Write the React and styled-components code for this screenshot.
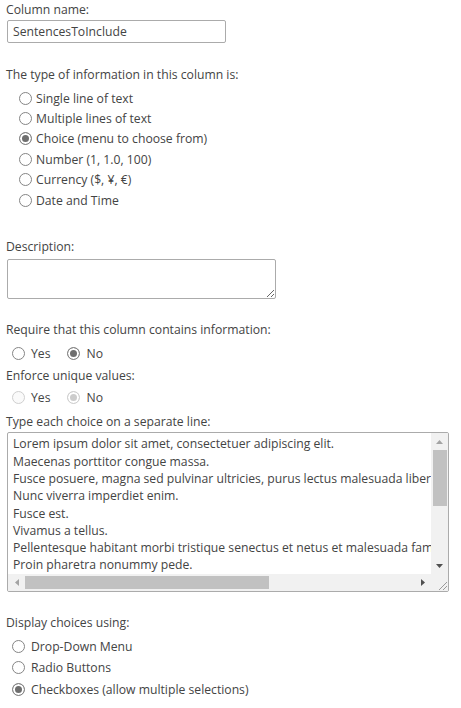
import React from "react";
import styled, { createGlobalStyle } from "styled-components";

const GlobalStyle = createGlobalStyle`
  html, body {
    margin: 0;
    padding: 0;
    background: #ffffff;
  }
  body {
    font-family: "Open Sans", "Noto Sans", sans-serif;
    font-size: 12.2px;
    color: #444444;
  }
`;

const Page = styled.div`
  display: flex;
  flex-direction: column;
  padding-left: 6px;
  width: 455px;
`;

const Label = styled.div`
  height: 20px;
  line-height: 20px;
  margin-top: ${(p) => p.$mt || 0}px;
  white-space: nowrap;
`;

const TextInput = styled.input`
  box-sizing: border-box;
  width: 219px;
  height: 23px;
  margin: 0 0 0 1px;
  padding: 0 5px;
  border: 1px solid #ababab;
  border-radius: 2px;
  font: inherit;
  color: #444444;
  outline: none;
`;

const RadioList = styled.div`
  display: flex;
  flex-direction: ${(p) => (p.$row ? "row" : "column")};
  gap: ${(p) => p.$gap || 0}px;
  margin-top: ${(p) => p.$mt || 0}px;
  padding-left: ${(p) => p.$indent || 0}px;
`;

const Option = styled.label`
  display: flex;
  align-items: center;
  height: ${(p) => p.$h || 20}px;
  gap: ${(p) => p.$space || 4}px;
  white-space: nowrap;
`;

const Dot = styled.span`
  box-sizing: border-box;
  flex: none;
  width: 13px;
  height: 13px;
  border-radius: 50%;
  border: 1px solid ${(p) => (p.$disabled ? "#cfcfcf" : "#858585")};
  background: ${(p) =>
    p.$checked ? (p.$disabled ? "#cccccc" : "#6e6e6e") : p.$disabled ? "#fafafa" : "#ffffff"};
  box-shadow: ${(p) => (p.$checked ? "inset 0 0 0 2px #ffffff" : "none")};
`;

const Description = styled.textarea`
  box-sizing: border-box;
  width: 269px;
  height: 40px;
  margin: 2px 0 0 1px;
  border: 1px solid #ababab;
  border-radius: 2px;
  font: inherit;
  resize: both;
  outline: none;
`;

const ChoiceBox = styled.div`
  box-sizing: border-box;
  display: grid;
  grid-template-columns: 1fr 17px;
  grid-template-rows: 1fr 17px;
  width: 442px;
  height: 160px;
  margin-left: 1px;
  border: 1px solid #ababab;
  border-radius: 2px;
  overflow: hidden;
`;

const ChoiceText = styled.div`
  overflow: hidden;
  padding: 2px 0 0 5px;
  white-space: nowrap;
  line-height: 17.3px;
`;

const Track = styled.div`
  display: flex;
  flex-direction: ${(p) => (p.$horizontal ? "row" : "column")};
  align-items: center;
  background: #f1f1f1;
`;

const ArrowBtn = styled.div`
  flex: none;
  width: 17px;
  height: 17px;
  display: flex;
  align-items: center;
  justify-content: center;
`;

const Thumb = styled.div`
  flex: none;
  background: #c1c1c1;
  ${(p) =>
    p.$horizontal
      ? `height: 13px; width: ${p.$size}px;`
      : `width: 14px; height: ${p.$size}px;`}
`;

const Spacer = styled.div`
  flex: 1;
`;

const Corner = styled.div`
  background: #f1f1f1;
  display: flex;
  align-items: flex-end;
  justify-content: flex-end;
`;

const Arrow = ({ dir, color }) => {
  const pts = {
    up: "0,4 7,4 3.5,0",
    down: "0,0 7,0 3.5,4",
    left: "4,0 4,7 0,3.5",
    right: "0,0 0,7 4,3.5",
  }[dir];
  const vertical = dir === "up" || dir === "down";
  return (
    <svg width={vertical ? 7 : 4} height={vertical ? 4 : 7}>
      <polygon points={pts} fill={color} />
    </svg>
  );
};

const Grip = () => (
  <svg width="12" height="12">
    <line x1="11" y1="3" x2="3" y2="11" stroke="#9a9a9a" strokeWidth="1" />
    <line x1="11" y1="7" x2="7" y2="11" stroke="#9a9a9a" strokeWidth="1" />
  </svg>
);

const Radio = ({ label, checked, disabled, h, space }) => (
  <Option $h={h} $space={space}>
    <Dot $checked={checked} $disabled={disabled} />
    <span>{label}</span>
  </Option>
);

const types = [
  "Single line of text",
  "Multiple lines of text",
  "Choice (menu to choose from)",
  "Number (1, 1.0, 100)",
  "Currency ($, ¥, €)",
  "Date and Time",
];

const choices = [
  "Lorem ipsum dolor sit amet, consectetuer adipiscing elit.",
  "Maecenas porttitor congue massa.",
  "Fusce posuere, magna sed pulvinar ultricies, purus lectus malesuada libero, sit amet commodo magna eros quis urna.",
  "Nunc viverra imperdiet enim.",
  "Fusce est.",
  "Vivamus a tellus.",
  "Pellentesque habitant morbi tristique senectus et netus et malesuada fames ac turpis egestas.",
  "Proin pharetra nonummy pede.",
];

const display = ["Drop-Down Menu", "Radio Buttons", "Checkboxes (allow multiple selections)"];

export default function App() {
  return (
    <Page>
      <GlobalStyle />
      <Label>Column name:</Label>
      <TextInput defaultValue="SentencesToInclude" />

      <Label $mt={22}>The type of information in this column is:</Label>
      <RadioList $mt={3} $indent={13}>
        {types.map((t, i) => (
          <Radio key={t} label={t} checked={i === 2} h={20.4} />
        ))}
      </RadioList>

      <Label $mt={27}>Description:</Label>
      <Description />

      <Label $mt={21}>Require that this column contains information:</Label>
      <RadioList $row $mt={3} $indent={6} $gap={17}>
        <Radio label="Yes" space={6} />
        <Radio label="No" checked space={6} />
      </RadioList>
      <Label $mt={3}>Enforce unique values:</Label>
      <RadioList $row $mt={1} $indent={6} $gap={17}>
        <Radio label="Yes" disabled space={6} />
        <Radio label="No" checked disabled space={6} />
      </RadioList>

      <Label $mt={5}>Type each choice on a separate line:</Label>
      <ChoiceBox>
        <ChoiceText>
          {choices.map((c) => (
            <div key={c}>{c}</div>
          ))}
        </ChoiceText>
        <Track>
          <ArrowBtn>
            <Arrow dir="up" color="#a3a3a3" />
          </ArrowBtn>
          <Thumb $size={56} />
          <Spacer />
          <ArrowBtn>
            <Arrow dir="down" color="#505050" />
          </ArrowBtn>
        </Track>
        <Track $horizontal>
          <ArrowBtn>
            <Arrow dir="left" color="#a3a3a3" />
          </ArrowBtn>
          <Thumb $horizontal $size={244} />
          <Spacer />
          <ArrowBtn>
            <Arrow dir="right" color="#505050" />
          </ArrowBtn>
        </Track>
        <Corner>
          <Grip />
        </Corner>
      </ChoiceBox>

      <Label $mt={21}>Display choices using:</Label>
      <RadioList $mt={2} $indent={6}>
        {display.map((d, i) => (
          <Radio key={d} label={d} checked={i === 2} h={21.7} space={6} />
        ))}
      </RadioList>
    </Page>
  );
}
